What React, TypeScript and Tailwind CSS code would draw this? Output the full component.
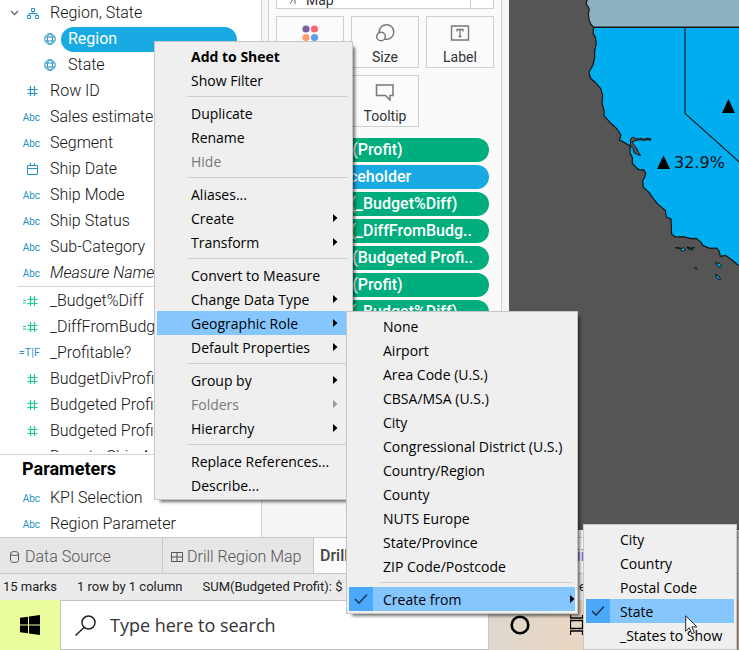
import type { ReactNode } from 'react'
import { clsx } from 'clsx'

type Kind = 'geo' | 'number' | 'text' | 'date' | 'calc' | 'bool' | 'hierarchy'

interface Field {
  name: string
  kind: Kind
  measure?: boolean
  italic?: boolean
  nested?: boolean
  selected?: boolean
}

const dimensions: Field[] = [
  { name: 'Region, State', kind: 'hierarchy' },
  { name: 'Region', kind: 'geo', nested: true, selected: true },
  { name: 'State', kind: 'geo', nested: true },
  { name: 'Row ID', kind: 'number' },
  { name: 'Sales estimate', kind: 'text' },
  { name: 'Segment', kind: 'text' },
  { name: 'Ship Date', kind: 'date' },
  { name: 'Ship Mode', kind: 'text' },
  { name: 'Ship Status', kind: 'text' },
  { name: 'Sub-Category', kind: 'text' },
  { name: 'Measure Names', kind: 'text', italic: true },
]

const measures: Field[] = [
  { name: '_Budget%Diff', kind: 'calc', measure: true },
  { name: '_DiffFromBudget', kind: 'calc', measure: true },
  { name: '_Profitable?', kind: 'bool' },
  { name: 'BudgetDivProfit', kind: 'number', measure: true },
  { name: 'Budgeted Profit', kind: 'number', measure: true },
  { name: 'Budgeted Profit', kind: 'number', measure: true },
  { name: 'Days to Ship Actual', kind: 'number', measure: true },
]

const parameters: Field[] = [
  { name: 'KPI Selection', kind: 'text' },
  { name: 'Region Parameter', kind: 'text' },
]

const pills = [
  { label: 'SUM(Profit)' },
  { label: 'Placeholder', blue: true },
  { label: 'AGG(_Budget%Diff)' },
  { label: 'AGG(_DiffFromBudg..' },
  { label: 'SUM(Budgeted Profi..' },
  { label: 'SUM(Profit)' },
  { label: 'AGG(_Budget%Diff)' },
]

interface Entry {
  label: string
  bold?: boolean
  disabled?: boolean
  sub?: boolean
  active?: boolean
  checked?: boolean
}

const fieldMenu: Entry[][] = [
  [{ label: 'Add to Sheet', bold: true }, { label: 'Show Filter' }],
  [{ label: 'Duplicate' }, { label: 'Rename' }, { label: 'Hide', disabled: true }],
  [{ label: 'Aliases...' }, { label: 'Create', sub: true }, { label: 'Transform', sub: true }],
  [
    { label: 'Convert to Measure' },
    { label: 'Change Data Type', sub: true },
    { label: 'Geographic Role', sub: true, active: true },
    { label: 'Default Properties', sub: true },
  ],
  [{ label: 'Group by', sub: true }, { label: 'Folders', sub: true, disabled: true }, { label: 'Hierarchy', sub: true }],
  [{ label: 'Replace References...' }, { label: 'Describe...' }],
]

const roleMenu: Entry[][] = [
  [
    { label: 'None' },
    { label: 'Airport' },
    { label: 'Area Code (U.S.)' },
    { label: 'CBSA/MSA (U.S.)' },
    { label: 'City' },
    { label: 'Congressional District (U.S.)' },
    { label: 'Country/Region' },
    { label: 'County' },
    { label: 'NUTS Europe' },
    { label: 'State/Province' },
    { label: 'ZIP Code/Postcode' },
  ],
  [{ label: 'Create from', sub: true, active: true, checked: true }],
]

const createMenu: Entry[][] = [
  [
    { label: 'City' },
    { label: 'Country' },
    { label: 'Postal Code' },
    { label: 'State', active: true, checked: true },
    { label: '_States to Show' },
  ],
]

function FieldIcon({ kind }: { kind: Kind }) {
  if (kind === 'text') return <span className="text-[10px] font-normal">Abc</span>
  if (kind === 'bool') return <span className="text-[11px] font-normal whitespace-nowrap">=T|F</span>
  if (kind === 'number' || kind === 'calc') {
    return (
      <svg width="17" height="12" viewBox="0 0 17 12" fill="none" stroke="currentColor" strokeWidth="1.200" aria-hidden="true">
        <path d="M7.500 1v10M11.500 1v10M4.500 4.500h10M4.500 8.500h10" />
        {kind === 'calc' && <path d="M0 5.500h3M0 8h3" />}
      </svg>
    )
  }
  if (kind === 'date') {
    return (
      <svg width="13" height="12" viewBox="0 0 13 12" fill="none" stroke="currentColor" aria-hidden="true">
        <path d="M.5 2.500h10v9H.5zM.5 5.500h10M3.500 0v3M7.500 0v3" />
      </svg>
    )
  }
  if (kind === 'hierarchy') {
    return (
      <svg width="12" height="12" viewBox="0 0 12 12" fill="none" stroke="currentColor" aria-hidden="true">
        <path d="M4.500 1.500h3v3h-3zM.5 8.500h3v3h-3zM8.500 8.500h3v3h-3zM6 4.500v2M2 8.500v-2h8v2" />
      </svg>
    )
  }
  return (
    <svg width="12" height="12" viewBox="0 0 12 12" fill="none" stroke="currentColor" aria-hidden="true">
      <circle cx="6" cy="6" r="5.300" />
      <ellipse cx="6" cy="6" rx="2.500" ry="5.300" />
      <path d="M1 4h10M1 8h10" />
    </svg>
  )
}

function FieldRow({ field }: { field: Field }) {
  return (
    <li className="flex h-[26px] items-center">
      <span
        className={clsx(
          'flex shrink-0 items-center',
          field.nested ? 'w-[61px] pl-11' : 'w-[50px]',
          field.kind === 'hierarchy' && 'gap-2 pl-2.5',
          !field.nested && field.kind !== 'hierarchy' && 'justify-end pr-2.5',
          field.measure ? 'text-[#1fc98a]' : 'text-[#2792c5]'
        )}
      >
        {field.kind === 'hierarchy' && (
          <svg width="9" height="6" viewBox="0 0 9 6" fill="none" stroke="#666" aria-hidden="true">
            <path d="M1 1l3.500 3.500L8 1" strokeWidth="1.300" />
          </svg>
        )}
        <FieldIcon kind={field.kind} />
      </span>
      <button
        type="button"
        className={clsx(
          'text-left whitespace-nowrap',
          field.italic && 'italic',
          field.nested && 'h-[25px] pl-[7px]',
          field.selected && 'mr-6 flex-1 rounded-full bg-[#19aae4] font-normal text-white'
        )}
      >
        {field.name}
      </button>
    </li>
  )
}

function DataPane() {
  return (
    <aside className="flex w-[262px] shrink-0 flex-col border-r border-[#d4d4d4] bg-white font-['Roboto',sans-serif] text-base font-light text-[#111]">
      <div className="mb-0.5 h-0 flex-1 overflow-hidden">
        <ul>
          {dimensions.map((f) => (
            <FieldRow key={f.name} field={f} />
          ))}
        </ul>
        <hr className="mb-px ml-[18px] border-[#d8d8d8]" />
        <ul>
          {measures.map((f, i) => (
            <FieldRow key={i} field={f} />
          ))}
        </ul>
      </div>
      <section className="border-t border-[#d4d4d4]">
        <h2 className="pb-0.5 pl-[22px] text-lg leading-7 font-bold text-black">Parameters</h2>
        <ul>
          {parameters.map((f) => (
            <FieldRow key={f.name} field={f} />
          ))}
        </ul>
      </section>
    </aside>
  )
}

function MarkButton({ label, children }: { label: string; children: ReactNode }) {
  return (
    <button type="button" className="flex h-[52px] flex-col items-center justify-between border border-[#cfcfcf] bg-[#fbfbfb] pt-1.5">
      <span className="flex h-5 items-center">{children}</span>
      <span>{label}</span>
    </button>
  )
}

function MarksCard() {
  return (
    <div className="w-[247px] shrink-0 bg-[#f5f5f5] pr-[7px] pl-1.5">
      <section className="flex h-[480px] flex-col border-x border-b border-[#cfcfcf] bg-[#fafafa] px-[7px] font-['Roboto',sans-serif] text-sm text-[#333]">
        <button type="button" className="flex h-[9px] shrink-0 items-end justify-between border border-t-0 border-[#cfcfcf] bg-white">
          <span className="flex items-center gap-2 pl-3 text-sm leading-4">
            <svg width="9" height="9" viewBox="0 0 9 9" fill="none" stroke="#666" aria-hidden="true">
              <path d="M1 8l3-5M6 3v5M4 2h4" />
            </svg>
            Map
          </span>
          <span className="h-2 w-[23px] border-l border-[#cfcfcf]" />
        </button>
        <div className="mt-[7px] grid grid-cols-3 gap-[7px]">
          <MarkButton label="Color">
            <svg width="18" height="18" viewBox="0 0 18 18" aria-hidden="true">
              <circle cx="5" cy="5" r="3.600" fill="#7e5ca8" />
              <circle cx="13.500" cy="5" r="3.600" fill="#fc6675" />
              <circle cx="5" cy="13.500" r="3.600" fill="#fd9e68" />
              <circle cx="13.500" cy="13.500" r="3.600" fill="#5d9ee8" />
            </svg>
          </MarkButton>
          <MarkButton label="Size">
            <svg width="20" height="20" viewBox="0 0 20 20" fill="#fbfbfb" stroke="#777" strokeWidth="1.500" aria-hidden="true">
              <circle cx="11.500" cy="9" r="7.300" />
              <circle cx="6" cy="13.500" r="4.300" />
            </svg>
          </MarkButton>
          <MarkButton label="Label">
            <svg width="20" height="18" viewBox="0 0 20 18" fill="none" stroke="#777" aria-hidden="true">
              <path d="M1.500 2h17v14h-17z" strokeWidth="1.400" />
              <path d="M7 7.500V5.500h6v2M10 5.500v7M8.500 12.500h3" strokeWidth="1.300" />
            </svg>
          </MarkButton>
          <MarkButton label="Detail">
            <svg width="18" height="18" viewBox="0 0 18 18" fill="none" stroke="#777" aria-hidden="true">
              <circle cx="9" cy="9" r="6" />
            </svg>
          </MarkButton>
          <MarkButton label="Tooltip">
            <svg width="20" height="18" viewBox="0 0 20 18" fill="none" stroke="#777" strokeWidth="1.500" aria-hidden="true">
              <path d="M1.500 2h16.500v10.500H15V17l-4.500-4.500h-9z" />
            </svg>
          </MarkButton>
        </div>
        <ul className="mt-[11px] mr-[5px] ml-[30px] space-y-[3px] text-base font-medium text-white">
          {pills.map((p, i) => (
            <li key={i}>
              <button
                type="button"
                className={clsx('h-6 w-full rounded-full text-left whitespace-nowrap', p.blue ? 'bg-[#19aae4] pl-5' : 'bg-[#00ad7c] pl-3')}
              >
                {p.label}
              </button>
            </li>
          ))}
        </ul>
      </section>
    </div>
  )
}

function MapView() {
  return (
    <div className="mb-[7px] min-w-0 flex-1 overflow-hidden bg-[#555]">
      <svg className="h-full w-full" viewBox="0 0 230 530" preserveAspectRatio="xMinYMin slice" role="img" aria-label="Profit by state">
        {/* outlines are drawn on a grid three times finer than the labels */}
        <g transform="translate(-9 0) scale(0.333333)" stroke="#111" strokeWidth="3.500" strokeLinejoin="round">
          <path
            fill="#8cb1c0"
            d="M261-6L261 3L258 11L265 21L268 28L265 40L267 58L272 72L281 82L740 82V-6z"
          />
          <path
            fill="#00adef"
            d="M281 82L279 100L286 112L289 130L284 152L284 174L279 195L267 216L271 234L288 249L302 266L308 286L306 310L312 330L312 347L330 367L351 387L363 405L358 420L372 427L390 438L390 460L397 472L397 490L409 503L418 510L431 509L437 520L434 532L428 541L430 562L447 577L457 592L474 613L496 631L499 651L513 657L515 703L526 711L548 710L574 716L589 715L603 727L609 737L629 745L650 744L658 754L661 769L676 766L696 780L725 804L740 818V82z"
          />
          <path fill="none" d="M555 82V340L740 506" />
          <g strokeWidth="3">
            <path fill="#555" d="M391 438L392 417L398 411L406 416L420 417L425 414L430 418L443 415L452 416L452 421L441 419L430 421L420 419L408 421L396 427L402 436L409 443L413 453L422 467L413 464L402 458L400 446z" />
            <path fill="none" d="M526 743L536 744L544 746M561 741L572 745L584 742" strokeWidth="4" />
            <path fill="#00adef" d="M542 747L550 743L557 750L551 754L543 751zM563 745L572 745L580 748L568 750zM583 804L588 802L592 806L587 808zM646 788L658 790L665 798L661 803L654 799zM646 823L655 827L662 838L656 840L650 833z" />
          </g>
        </g>
        <path d="M148 169l6.500-13.500L161 169zM213 113l6.500-14L226 113z" fill="#000" />
        <text x="165" y="168" fontSize="16" fill="#111" className="font-['DejaVu_Sans',sans-serif]">
          32.9%
        </text>
      </svg>
    </div>
  )
}

function Menu({ groups, label, className }: { groups: Entry[][]; label: string; className: string }) {
  return (
    <div
      role="menu"
      aria-label={label}
      className={clsx(
        "absolute border border-[#c6c6c6] bg-[#efefef] p-0.5 font-['Open_Sans',sans-serif] text-sm text-black shadow-[4px_4px_3px_-2px_rgba(0,0,0,0.55)]",
        className
      )}
    >
      {groups.map((group, g) => (
        <div key={g}>
          {g > 0 && <hr className="mt-1 mr-0.5 mb-1 ml-[30px] border-[#cfcfcf]" />}
          {group.map((item) => (
            <button
              key={item.label}
              type="button"
              role="menuitem"
              disabled={item.disabled}
              className={clsx(
                'flex h-6 w-full items-center text-left whitespace-nowrap',
                item.bold && 'font-bold',
                item.disabled && 'text-[#7a7a7a]',
                item.active && 'bg-[#86c6ff]'
              )}
            >
              <span className={clsx('mr-2.5 flex size-6 shrink-0 items-center justify-center', item.checked && 'bg-[#4ba8fb]')}>
                {item.checked && (
                  <svg width="14" height="12" viewBox="0 0 14 12" fill="none" stroke="#1c3b5c" strokeWidth="1.600" aria-hidden="true">
                    <path d="M1 6l4 4L13 1.500" />
                  </svg>
                )}
              </span>
              <span className="flex-1 pt-0.5">{item.label}</span>
              {item.sub && (
                <svg width="5" height="8" viewBox="0 0 5 8" fill={item.disabled ? '#999' : '#000'} aria-hidden="true">
                  <path d="M0 0l4.500 4L0 8z" />
                </svg>
              )}
            </button>
          ))}
        </div>
      ))}
    </div>
  )
}

function SheetTabs() {
  return (
    <nav className="flex h-[37px] border-y border-[#c9c9c9] bg-[#e6e6e6] font-['Roboto',sans-serif] text-base font-light text-[#555]">
      <button type="button" className="flex w-[163px] items-center gap-1.5 border-r border-[#c9c9c9] pt-0.5 pl-2.5">
        <svg width="9" height="12" viewBox="0 0 9 12" fill="none" stroke="#555" aria-hidden="true">
          <ellipse cx="4.500" cy="2.500" rx="4" ry="2" />
          <path d="M.5 2.500v7c0 1.100 1.800 2 4 2s4-.9 4-2v-7" />
        </svg>
        Data Source
      </button>
      <button type="button" className="flex w-[151px] items-center gap-1 border-r border-[#c9c9c9] pt-0.5 pl-2">
        <svg width="12" height="12" viewBox="0 0 12 12" fill="none" stroke="#555" aria-hidden="true">
          <path d="M.5 1.500h11v9H.5zM6 1.500v9M.5 6h11" />
        </svg>
        Drill Region Map
      </button>
      <button type="button" className="flex-1 bg-[#fafafa] pl-1.5 text-left font-medium whitespace-nowrap text-[#444]">
        Drill Map
      </button>
      <button type="button" className="w-[162px] bg-[#fafafa] text-left text-[#3d3dc8]">
        ii
      </button>
    </nav>
  )
}

function Taskbar() {
  return (
    <footer className="flex h-[50px] bg-linear-to-r from-[#ddd8d0] from-65% to-[#f0d5ba] to-85%">
      <button type="button" aria-label="Start" className="flex w-[60px] shrink-0 items-center justify-center bg-[#eafd9c]">
        <svg width="20" height="20" viewBox="0 0 20 20" aria-hidden="true">
          <path d="M0 2.800L8 1.700V9.500H0zM9 1.500L20 0v9.500H9zM0 10.500h8v7.800L0 17.200zM9 10.500h11V20L9 18.500z" />
        </svg>
      </button>
      <label className="flex w-[429px] items-center gap-3.5 border border-[#c4c4c4] bg-white pl-3.5">
        <svg width="21" height="21" viewBox="0 0 21 21" fill="none" stroke="#222" strokeWidth="1.500" aria-hidden="true">
          <circle cx="13.500" cy="7.500" r="6.500" />
          <path d="M9 12.500L.5 20.500" />
        </svg>
        <input
          type="text"
          aria-label="Search"
          placeholder="Type here to search"
          className="min-w-0 flex-1 font-['Open_Sans',sans-serif] text-lg outline-none placeholder:text-[#333]"
        />
      </label>
      <div className="flex items-center gap-10 pl-[21px]">
        <button type="button" aria-label="Cortana">
          <svg width="20" height="20" viewBox="0 0 20 20" fill="none" stroke="#000" strokeWidth="2.600" aria-hidden="true">
            <circle cx="10" cy="10" r="8.300" />
          </svg>
        </button>
        <button type="button" aria-label="Task view">
          <svg width="20" height="20" viewBox="0 0 20 20" fill="none" stroke="#000" strokeWidth="1.300" aria-hidden="true">
            <path d="M.5 0v3h12V0M.5 5.500h12v8H.5zM.5 20v-4h12v4M16.500 0v20" />
          </svg>
        </button>
      </div>
    </footer>
  )
}

export default function App() {
  return (
    <div className="relative flex h-screen min-h-[650px] flex-col overflow-hidden bg-[#f5f5f5]">
      <main className="flex min-h-0 flex-1">
        <DataPane />
        <MarksCard />
        <MapView />
      </main>
      <SheetTabs />
      <div className="flex h-[26px] items-center gap-5 bg-[#ebebeb] pl-[3px] font-['Roboto',sans-serif] text-[13px] whitespace-nowrap text-[#222]">
        <span>15 marks</span>
        <span>1 row by 1 column</span>
        <span>SUM(Budgeted Profit): $</span>
        <span className="ml-auto w-40">e</span>
      </div>
      <Taskbar />

      <Menu groups={fieldMenu} label="Region" className="top-[41px] left-[154px] w-[199px] [&_svg]:mr-3" />
      <Menu groups={roleMenu} label="Geographic Role" className="top-[311px] left-[346px] w-[232px]" />
      <Menu groups={createMenu} label="Create from" className="top-[524px] left-[583px] w-[154px]" />

      <svg className="pointer-events-none absolute top-[615px] left-[685px]" width="13" height="20" viewBox="0 0 13 20" aria-hidden="true">
        <path d="M.7.800v15.500l3.600-3.500 2.500 6 2.600-1.100-2.500-5.800h5z" fill="#fff" stroke="#222" />
      </svg>
    </div>
  )
}
